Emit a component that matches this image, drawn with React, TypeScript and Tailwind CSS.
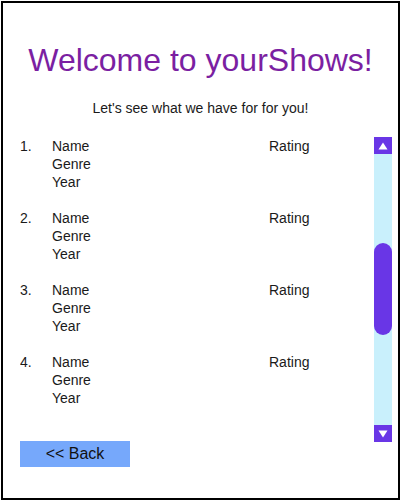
const SHOWS = [1, 2, 3, 4];

function ScrollArrow({ dir }: { dir: "up" | "down" }) {
  return (
    <div className="flex h-[17px] w-[18px] items-center justify-center bg-[#6936e6]">
      <svg width="10" height="8" viewBox="0 0 10 8">
        {dir === "up" ? (
          <polygon points="5,0.5 9.5,7.5 0.5,7.5" fill="#fff" />
        ) : (
          <polygon points="0.5,0.5 9.5,0.5 5,7.5" fill="#fff" />
        )}
      </svg>
    </div>
  );
}

export default function App() {
  return (
    <div
      className="ml-[1px] mt-[1px] flex h-[499px] w-[399px] flex-col border-2 border-black bg-white text-[#1a1a1a]"
      style={{ fontFamily: '"Liberation Sans", Arial, sans-serif' }}
    >
      <h1 className="mt-[41px] text-center text-[32px] leading-[32px] text-[#7b1fa2]">
        Welcome to yourShows!
      </h1>
      <p className="mt-[23px] text-center text-[14px] leading-[18px]">
        Let's see what we have for for you!
      </p>

      {/* list + fake scrollbar */}
      <div className="mt-[20px] flex h-[304px] pl-[17px] pr-[6px]">
        <ol className="flex-1 overflow-hidden text-[14px] leading-[18px]">
          {SHOWS.map((n) => (
            <li key={n} className="mb-[18px] flex">
              <span className="w-[32px]">{n}.</span>
              <div className="flex w-[217px] flex-col">
                <span>Name</span>
                <span>Genre</span>
                <span>Year</span>
              </div>
              <span>Rating</span>
            </li>
          ))}
        </ol>
        <div className="flex h-[305px] w-[18px] flex-col">
          <ScrollArrow dir="up" />
          <div className="flex flex-1 flex-col bg-[#c9f0fc] pt-[89px]">
            <div className="h-[92px] w-[18px] rounded-full bg-[#6936e6]" />
          </div>
          <ScrollArrow dir="down" />
        </div>
      </div>

      <div className="pl-[17px]">
        <button className="h-[26px] w-[110px] bg-[#76a8fb] text-[16px] leading-[26px] text-[#111]">
          &lt;&lt; Back
        </button>
      </div>
    </div>
  );
}
